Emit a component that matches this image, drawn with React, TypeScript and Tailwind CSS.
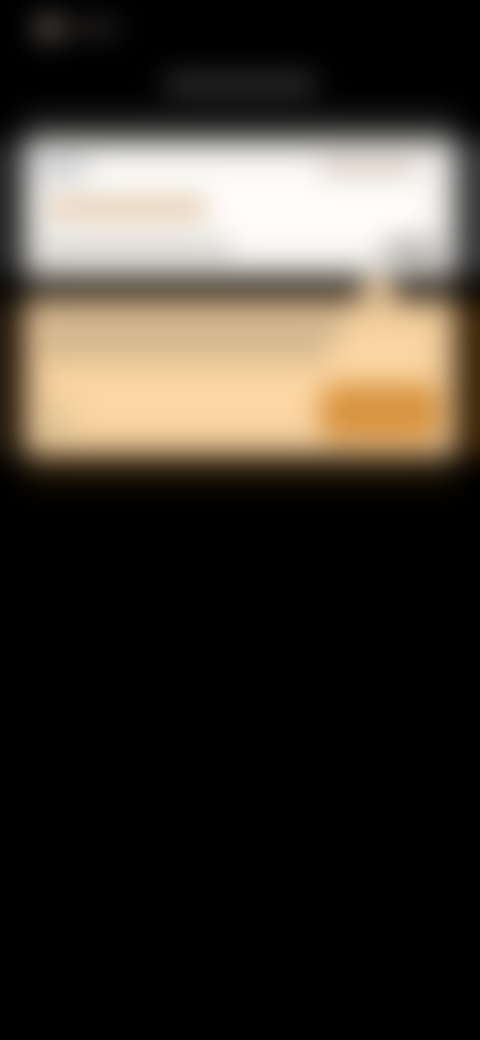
import React from "react";

/** A soft bar standing for a line of text whose words are blurred away. */
function Line({ className }: { className: string }) {
  return <div aria-hidden="true" className={"rounded-md " + className} />;
}

export default function App() {
  return (
    <main className="min-h-screen overflow-hidden bg-black font-['Liberation_Sans',sans-serif]">
      <div className="-mx-8 blur-[14px]">
        <header className="flex h-14 items-center gap-1 px-16">
          <div className="ml-1 h-7 w-6 rounded-full bg-[#68605a]" />
          <Line className="h-4 w-14 bg-[#2b2826]" />
        </header>

        <div className="flex h-14 items-center justify-center">
          <Line className="h-5 w-38 bg-[#343434]" />
        </div>
        <div className="mx-14 h-7 bg-linear-to-b from-[#181818] via-[#242423] to-[#3a3a38]" />

        <section className="bg-linear-to-r from-[#202020] to-[#363636] px-14">
          <div className="flex h-34 flex-col justify-between bg-[#fefdfb] px-4 pt-5 pb-4 shadow-[inset_0_0_36px_rgba(0,0,0,0.35)]">
            <div className="flex justify-between">
              <Line className="h-4 w-12 bg-[#bcbcc0]" />
              <Line className="mr-6 h-4 w-24 bg-[#d8c6b8]" />
            </div>
            <Line className="ml-2 h-5 w-40 bg-[#dec2a2]" />
            <div className="flex justify-between">
              <Line className="h-4 w-48 bg-[#cfccc4]" />
              <Line className="h-5 w-14 bg-[#a8a7a6]" />
            </div>
          </div>
        </section>

        <div className="mx-14 flex h-6 justify-end bg-[#2c2419] pr-14">
          <svg viewBox="0 0 44 24" className="h-6 w-11" aria-hidden="true">
            <path d="M14 0H30L44 24H0Z" fill="#e8c79c" />
          </svg>
        </div>

        <section className="bg-linear-to-r from-[#20160a] to-[#3c2408] px-14">
          <div className="flex h-39 flex-col justify-between bg-[#fcd6a3] px-4 pt-3 pb-4 shadow-[inset_0_0_32px_rgba(0,0,0,0.35)]">
            <div className="flex flex-col">
              <Line className="h-7 w-76 bg-[#d2b690]" />
              <Line className="h-6 w-72 bg-[#d9bb90]" />
            </div>
            <div className="flex items-end justify-between">
              <Line className="h-10 w-8 bg-[#e4c698]" />
              <button
                type="button"
                aria-label="Continue"
                className="h-14 w-30 rounded-2xl bg-[#d7933f]"
              />
            </div>
          </div>
        </section>
        <div className="mx-14 h-12 bg-linear-to-b from-[#2a1c0a] via-[#171003] to-black" />
      </div>
    </main>
  );
}
